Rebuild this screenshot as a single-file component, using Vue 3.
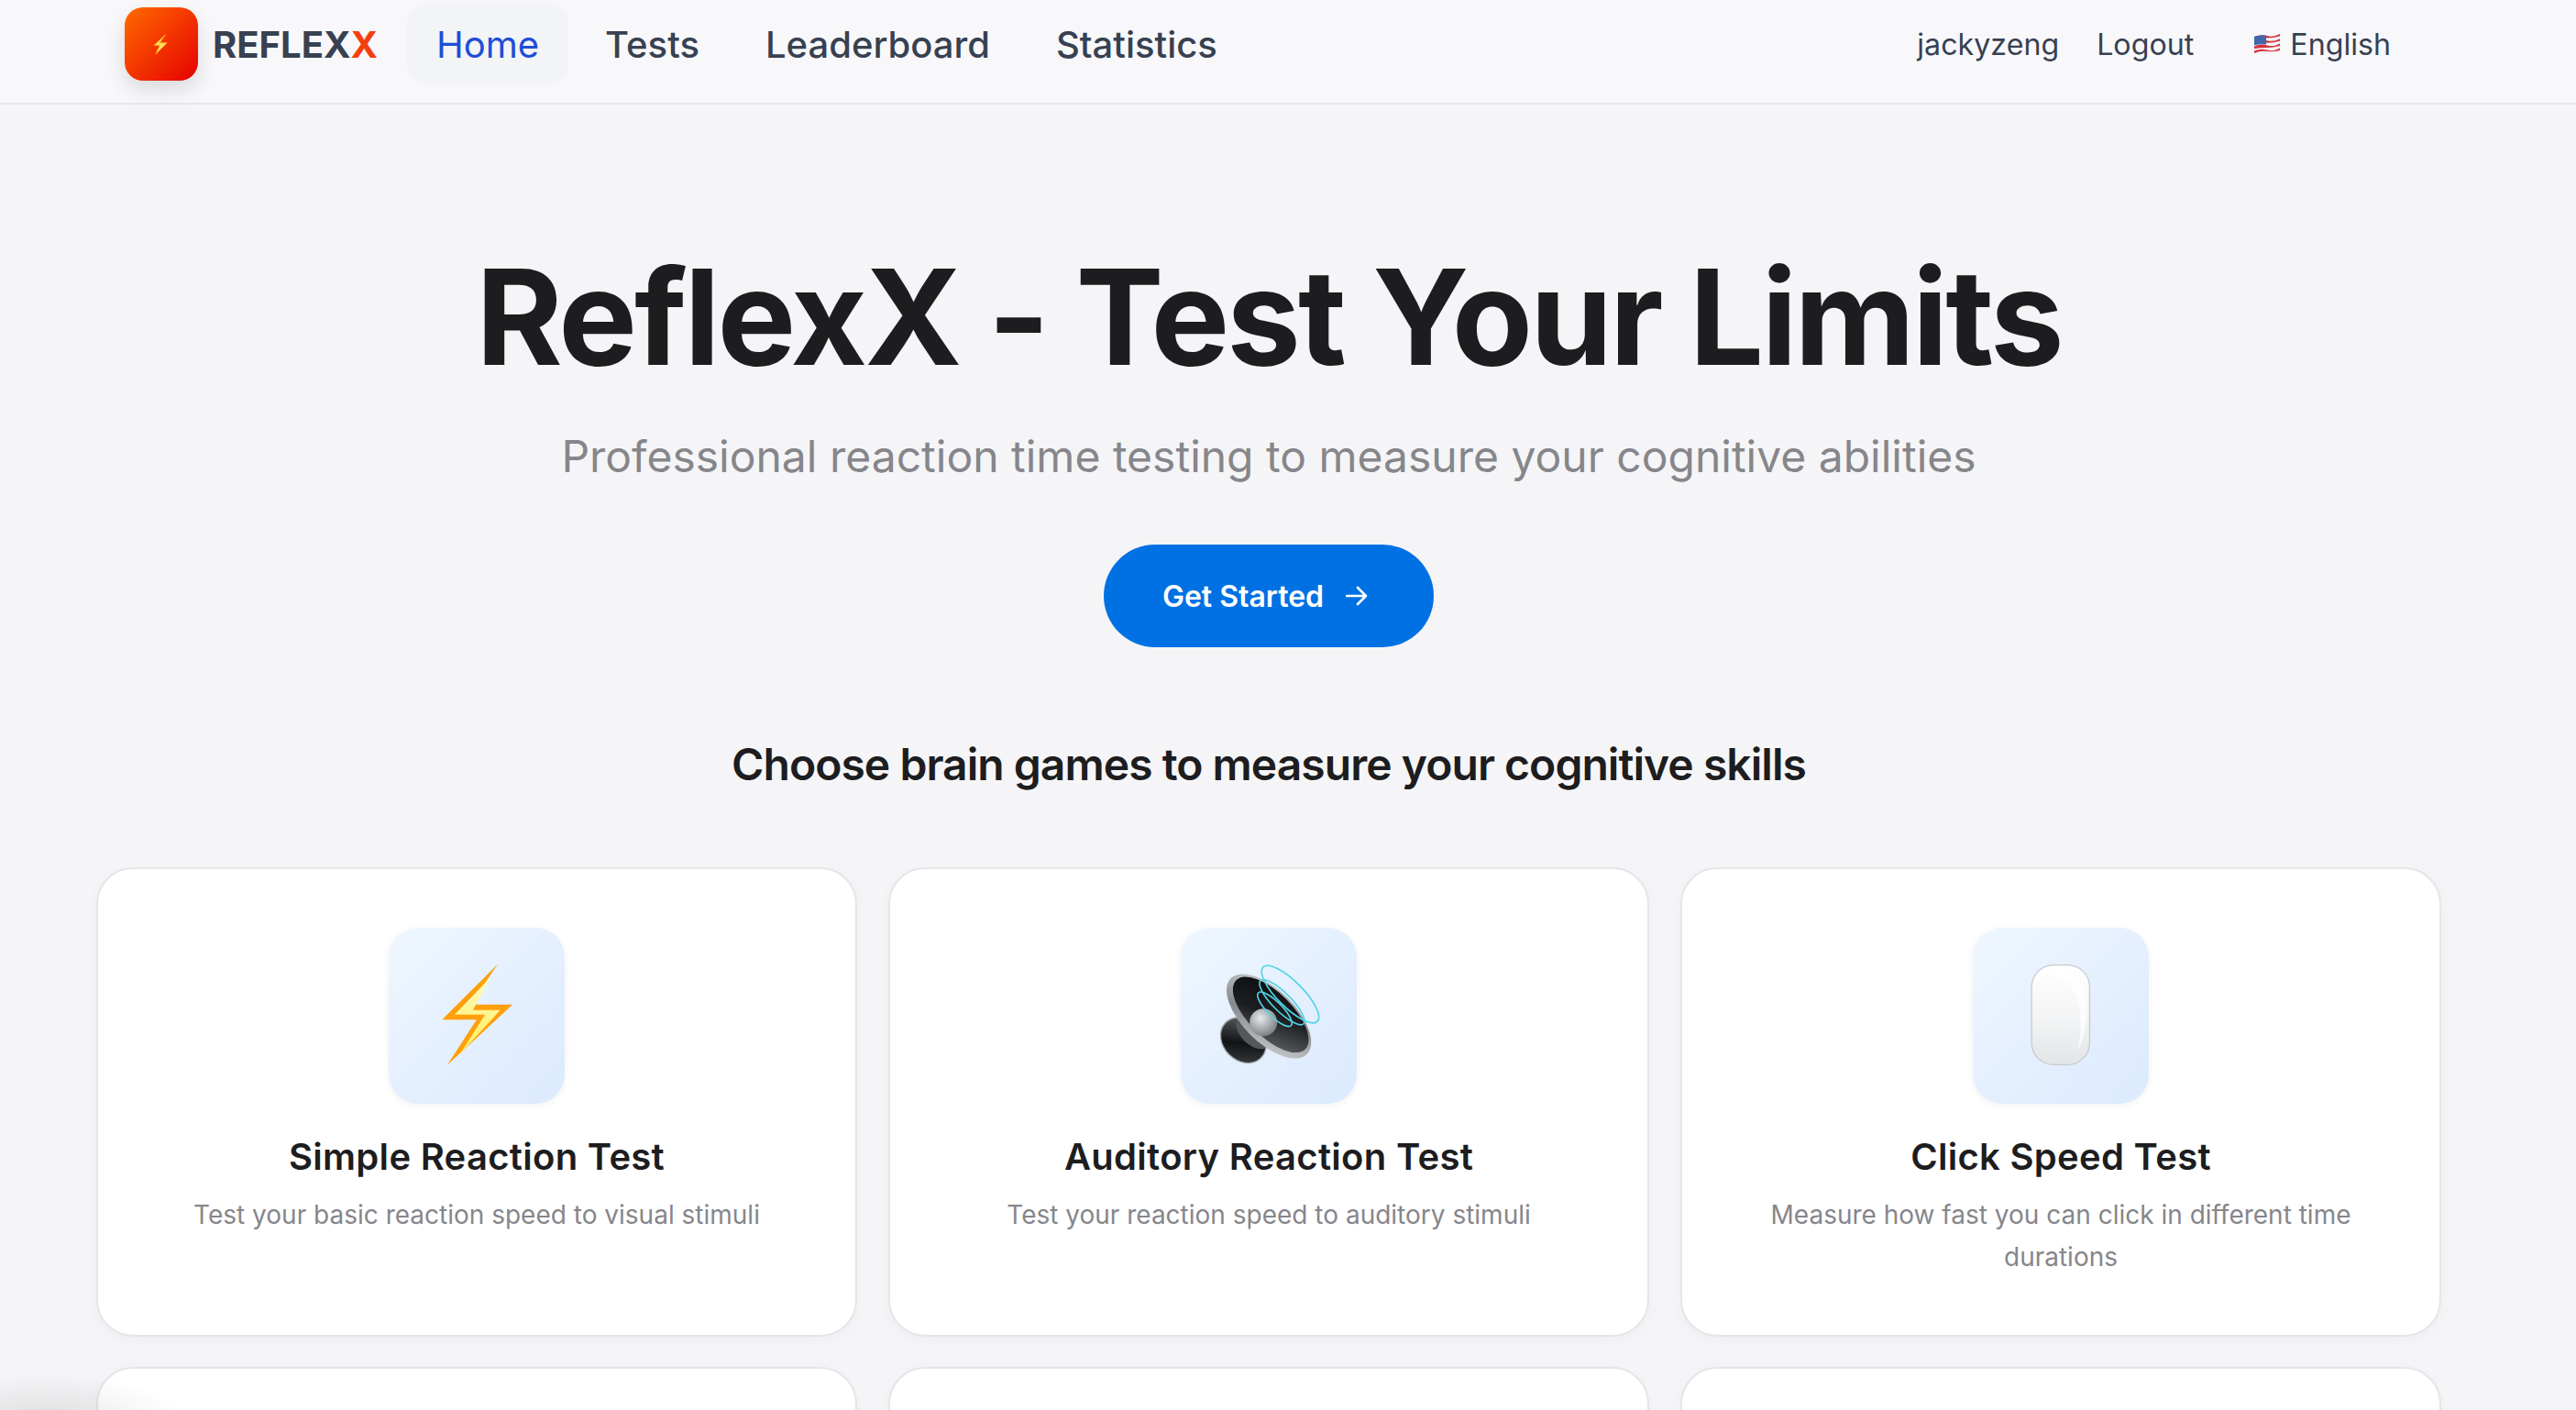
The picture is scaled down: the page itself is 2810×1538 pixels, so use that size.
<script setup>
const games = [
  { id: 'bolt', title: 'Simple Reaction Test', desc: 'Test your basic reaction speed to visual stimuli' },
  { id: 'speaker', title: 'Auditory Reaction Test', desc: 'Test your reaction speed to auditory stimuli' },
  { id: 'mouse', title: 'Click Speed Test', desc: 'Measure how fast you can click in different time durations' },
  { id: 'a' }, { id: 'b' }, { id: 'c' },
]
const links = ['Home', 'Tests', 'Leaderboard', 'Statistics']
</script>

<template>
  <div class="page">
    <header class="nav">
      <div class="nav-inner">
        <div class="logo">
          <svg width="16" height="23" viewBox="0 0 18 24">
            <polygon points="14,0 7,10 16,10 2,24 7,13 0,13" fill="#ffe060" stroke="#ffa51e" stroke-width="1" />
          </svg>
        </div>
        <div class="brand">REFLEX<span>X</span></div>
        <nav class="links">
          <a v-for="(l, i) in links" :key="l" class="link" :class="{ active: i === 0 }">{{ l }}</a>
        </nav>
        <div class="right">
          <span class="user">jackyzeng</span>
          <span class="logout">Logout</span>
          <span class="lang">
            <svg class="flag" width="28" height="22" viewBox="0 0 28 22">
              <path d="M0 3 Q7 0 14 2 T28 0 V18 Q21 20 14 19 T0 21 Z" fill="#f4f4f6" />
              <path d="M0 3 Q7 0 14 2 T28 0 V2.6 Q21 4.6 14 4.6 T0 5.6 Z M0 8.2 Q7 5.2 14 7.2 T28 5.2 V7.8 Q21 9.8 14 9.8 T0 10.8 Z M0 13.4 Q7 10.4 14 12.4 T28 10.4 V13 Q21 15 14 15 T0 16 Z M0 18.6 Q7 15.6 14 17.6 T28 15.6 V18 Q21 20 14 19 T0 21 Z" fill="#d8303c" />
              <path d="M0 3 Q6 .8 13 1.8 V11.4 Q6 10.6 0 12.4 Z" fill="#3f69ab" />
            </svg>
            English
          </span>
        </div>
      </div>
    </header>

    <main class="main">
      <h1 class="title">ReflexX - Test Your Limits</h1>
      <p class="sub">Professional reaction time testing to measure your cognitive abilities</p>
      <button class="cta">
        Get Started
        <svg width="24" height="24" viewBox="0 0 24 24" fill="none" stroke="#fff" stroke-width="2.6" stroke-linecap="round" stroke-linejoin="round">
          <path d="M1 12 H22 M13 3 L22 12 L13 21" />
        </svg>
      </button>
      <h2 class="choose">Choose brain games to measure your cognitive skills</h2>

      <section class="grid">
        <article v-for="g in games" :key="g.id" class="card">
          <template v-if="g.title">
            <div class="icon">
              <svg v-if="g.id === 'bolt'" width="192" height="192" viewBox="70 66 577 577">
                <defs>
                  <linearGradient id="boltFill" x1="0" y1="0" x2="0" y2="1">
                    <stop offset="0" stop-color="#fffcc8" />
                    <stop offset="1" stop-color="#ffec50" />
                  </linearGradient>
                </defs>
                <polygon points="428,185 338,318 476,318 262,516 358,367 245,367" fill="#ff9f0c" />
                <polygon points="406,226 346,336 436,336 302,482 386,351 286,351" fill="url(#boltFill)" />
              </svg>
              <svg v-else-if="g.id === 'speaker'" width="192" height="192" viewBox="83 66 577 577">
                <defs>
                  <linearGradient id="rim" x1="0" y1="0" x2="1" y2="1">
                    <stop offset="0" stop-color="#d4d6d9" />
                    <stop offset=".5" stop-color="#85888c" />
                    <stop offset="1" stop-color="#d8dadc" />
                  </linearGradient>
                  <linearGradient id="cone" x1="0" y1="0" x2="1" y2="1">
                    <stop offset="0" stop-color="#090a0c" />
                    <stop offset=".5" stop-color="#1d1e21" />
                    <stop offset="1" stop-color="#6a6d71" />
                  </linearGradient>
                  <linearGradient id="back" x1="0" y1="0" x2="1" y2="1">
                    <stop offset="0" stop-color="#6a6c70" />
                    <stop offset=".55" stop-color="#121315" />
                    <stop offset="1" stop-color="#45474a" />
                  </linearGradient>
                  <radialGradient id="dome" cx=".4" cy=".35" r=".7">
                    <stop offset="0" stop-color="#e6eaed" />
                    <stop offset="1" stop-color="#787c80" />
                  </radialGradient>
                </defs>
                <ellipse cx="288" cy="435" rx="82" ry="66" transform="rotate(45 288 435)" fill="url(#back)" stroke="#a4a7aa" stroke-width="4" />
                <ellipse cx="322" cy="405" rx="70" ry="44" transform="rotate(45 322 405)" fill="#55575a" />
                <ellipse cx="372" cy="356" rx="176" ry="86" transform="rotate(45 372 356)" fill="url(#rim)" />
                <ellipse cx="378" cy="351" rx="160" ry="72" transform="rotate(45 378 351)" fill="url(#cone)" />
                <circle cx="354" cy="376" r="45" fill="url(#dome)" />
                <g fill="none" stroke="#52d3e4" stroke-width="5">
                  <ellipse cx="442" cy="284" rx="126" ry="42" transform="rotate(45 442 284)" />
                  <ellipse cx="415" cy="310" rx="100" ry="30" transform="rotate(45 415 310)" />
                  <ellipse cx="391" cy="333" rx="76" ry="24" transform="rotate(45 391 333)" />
                </g>
              </svg>
              <svg v-else width="192" height="192" viewBox="97 66 577 577">
                <defs>
                  <linearGradient id="mouseFill" x1="0" y1="0" x2="0" y2="1">
                    <stop offset="0" stop-color="#ffffff" />
                    <stop offset=".55" stop-color="#f3f4f5" />
                    <stop offset="1" stop-color="#e2e4e6" />
                  </linearGradient>
                </defs>
                <rect x="290" y="188" width="190" height="327" rx="72" fill="url(#mouseFill)" stroke="#c9cacd" stroke-width="4" />
                <path d="M350 215 Q430 230 448 340 Q456 400 440 470 Q470 420 470 330 Q466 215 385 198 Z" fill="#ffffff" opacity=".7" />
              </svg>
            </div>
            <h3 class="card-title">{{ g.title }}</h3>
            <p class="card-desc">{{ g.desc }}</p>
          </template>
        </article>
      </section>
    </main>
    <div class="corner"></div>
  </div>
</template>

<style>
html, body { margin: 0; background: #f5f5f7; overflow: hidden; }
</style>

<style scoped>
.page {
  position: relative;
  width: 2810px;
  height: 1538px;
  overflow: hidden;
  background: #f5f5f7;
  font-family: Inter, "Noto Sans", sans-serif;
}
.nav {
  background: #f8f8fb;
  border-bottom: 2px solid #e6e7eb;
  height: 112px;
}
.nav-inner {
  width: 2768px;
  box-sizing: border-box;
  padding: 0 136px;
  height: 96px;
  display: flex;
  align-items: center;
}
.logo {
  width: 80px;
  height: 80px;
  border-radius: 20px;
  background: linear-gradient(135deg, #ff6a00, #e60000);
  box-shadow: 0 10px 22px rgba(0, 0, 0, .12);
  display: flex;
  align-items: center;
  justify-content: center;
}
.brand {
  margin-left: 16px;
  font-size: 40px;
  font-weight: 700;
  color: #374151;
}
.brand span { color: #f4400c; }
.links { display: flex; gap: 8px; margin-left: 32px; }
.link {
  height: 88px;
  padding: 0 32px;
  display: flex;
  align-items: center;
  font-size: 40px;
  font-weight: 500;
  color: #374151;
  border-radius: 20px;
}
.link.active { color: #1d4ed8; background: #f3f4f6; font-weight: 400; }
.right {
  margin-left: auto;
  display: flex;
  align-items: center;
  font-size: 32.2px;
  color: #374151;
}
.logout { margin-left: 41px; }
.lang {
  margin-left: 66px;
  margin-right: 24px;
  display: flex;
  align-items: center;
  gap: 11px;
}
.main {
  width: 2768px;
  display: flex;
  flex-direction: column;
  align-items: center;
}
.title {
  margin: 152px 0 0;
  font-size: 144px;
  line-height: 160px;
  font-weight: 700;
  letter-spacing: -2.9px;
  color: #1d1d1f;
}
.sub {
  margin: 40px 0 0;
  font-size: 48px;
  line-height: 64px;
  color: #86868b;
}
.cta {
  margin-top: 64px;
  height: 112px;
  width: 360px;
  padding: 0 8px 0 0;
  border: 0;
  border-radius: 56px;
  background: #0071e3;
  color: #fff;
  font: 600 32px Inter, sans-serif;
  display: flex;
  align-items: center;
  justify-content: center;
  gap: 24px;
}
.choose {
  margin: 96px 0 0;
  font-size: 48px;
  line-height: 64px;
  font-weight: 600;
  letter-spacing: -.96px;
  color: #1d1d1f;
}
.grid {
  margin-top: 80px;
  display: grid;
  grid-template-columns: repeat(3, 830px);
  grid-auto-rows: 512px;
  gap: 33px 34px;
}
.card {
  box-sizing: border-box;
  background: #fff;
  border: 2px solid #e5e5ea;
  border-radius: 40px;
  padding: 64px 48px 0;
  box-shadow: 0 4px 16px rgba(0, 0, 0, .03);
  text-align: center;
}
.icon {
  width: 192px;
  height: 192px;
  margin: 0 auto;
  border-radius: 32px;
  background: linear-gradient(135deg, #eff6ff, #dbeafe);
  box-shadow: 0 2px 8px rgba(0, 0, 0, .06);
}
.icon svg { display: block; }
.card-title {
  margin: 30px 0 0;
  font-size: 40px;
  line-height: 56px;
  font-weight: 600;
  letter-spacing: .3px;
  color: #1d1d1f;
}
.card-desc {
  margin: 12px 0 0;
  font-size: 28px;
  line-height: 46px;
  color: #86868b;
}
.corner {
  position: absolute;
  left: -100px;
  bottom: -60px;
  width: 300px;
  height: 100px;
  background: radial-gradient(closest-side, rgba(0, 0, 0, .09), rgba(0, 0, 0, 0));
}
</style>
